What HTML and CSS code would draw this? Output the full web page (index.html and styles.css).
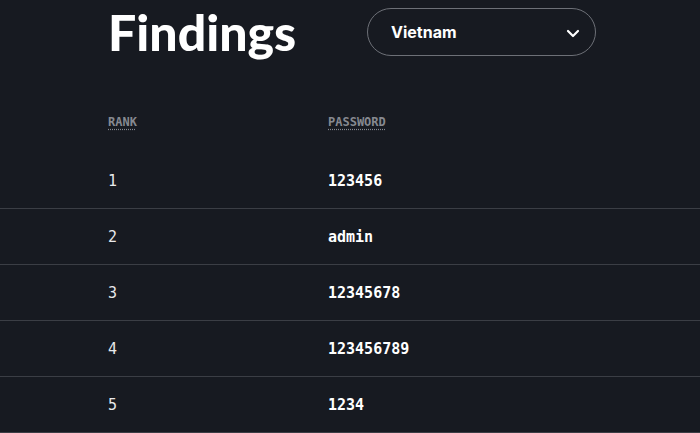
FILE: index.html
```html
<!DOCTYPE html>
<html lang="en">
<head>
    <meta charset="UTF-8">
    <meta name="viewport" content="width=device-width, initial-scale=1.0">
    <title>Findings</title>
    <link rel="stylesheet" href="styles.css">
</head>
<body>
    <div class="findings">
        <div class="findings-head">
            <h1 class="title">Findings</h1>
            <div class="country-select">
                <span>Vietnam</span>
                <svg class="chevron" width="14" height="9" viewBox="0 0 14 9">
                    <path d="M2 2 L7 7 L12 2" fill="none" stroke="#fff" stroke-width="2.2" stroke-linecap="round" stroke-linejoin="round"/>
                </svg>
            </div>
        </div>

        <table class="pw-table">
            <thead>
                <tr>
                    <th class="col-rank"><abbr>RANK</abbr></th>
                    <th class="col-pw"><abbr>PASSWORD</abbr></th>
                </tr>
            </thead>
            <tbody>
                <tr><td class="col-rank">1</td><td class="col-pw">123456</td></tr>
                <tr><td class="col-rank">2</td><td class="col-pw">admin</td></tr>
                <tr><td class="col-rank">3</td><td class="col-pw">12345678</td></tr>
                <tr><td class="col-rank">4</td><td class="col-pw">123456789</td></tr>
                <tr><td class="col-rank">5</td><td class="col-pw">1234</td></tr>
            </tbody>
        </table>
    </div>
</body>
</html>
```

FILE: styles.css
```css
:root {
    --bg: #171a21;
    --line: #3b3e45;
    --muted: #868990;
}

body {
    margin: 0;
    background: var(--bg);
    color: #fff;
    font-family: Inter, "Noto Sans", sans-serif;
    overflow: hidden;
}

.findings-head {
    display: flex;
    align-items: flex-start;
    padding-left: 108px;
    height: 94px;
}

.title {
    margin: 0;
    font-family: Lato, Inter, sans-serif;
    font-size: 50px;
    font-weight: 900;
    line-height: 1;
    padding-top: 7px;
    width: 259px;
}

.country-select {
    margin-top: 8px;
    width: 229px;
    height: 48px;
    box-sizing: border-box;
    border: 1px solid #6d7077;
    border-radius: 24px;
    display: flex;
    align-items: center;
    justify-content: space-between;
    padding: 0 15px 0 23px;
    font-weight: 700;
    font-size: 16px;
}

.chevron {
    margin-top: 2px;
}

.pw-table {
    width: 100%;
    border-collapse: collapse;
    font-family: "DejaVu Sans Mono", "Liberation Mono", monospace;
}

.pw-table th,
.pw-table td {
    padding: 0;
    vertical-align: middle;
}

.pw-table th {
    text-align: left;
    font-size: 12px;
    font-weight: 700;
    color: var(--muted);
    height: 55px;
    padding-bottom: 4px;
}

.pw-table abbr {
    text-decoration: underline dotted;
    text-underline-offset: 3px;
}

.pw-table td {
    height: 55px;
    border-bottom: 1px solid var(--line);
    font-size: 15px;
}

.col-rank {
    padding-left: 108px !important;
    width: 220px;
}

td.col-rank {
    font-weight: 400;
    color: #e8e9eb;
}

.col-pw {
    font-weight: 700;
}
```
